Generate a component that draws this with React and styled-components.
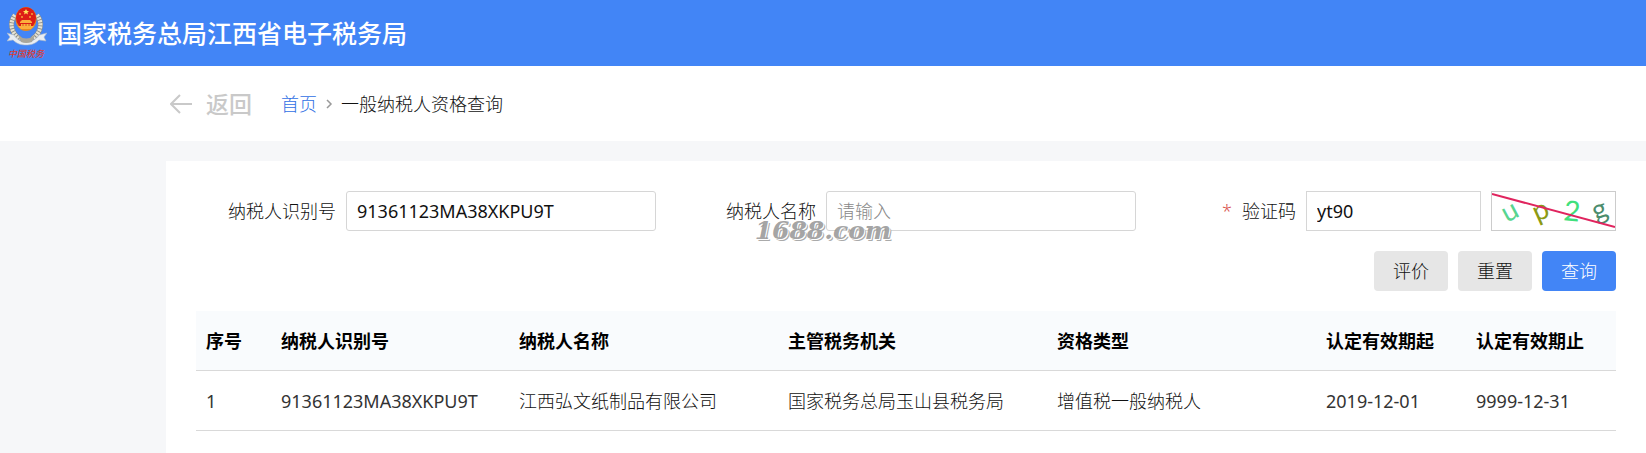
import React from 'react'
import styled, { createGlobalStyle, css } from 'styled-components'

const GlobalStyle = createGlobalStyle`
  * {
    box-sizing: border-box;
  }
  body {
    margin: 0;
    background: #f6f7f9;
    color: #111;
    font-family: 'Noto Sans', 'Noto Sans CJK SC', sans-serif;
    font-size: 18px;
    font-weight: 300;
    line-height: 24px;
  }
  button,
  input {
    font: inherit;
    color: inherit;
  }
`

const Page = styled.div`
  position: relative;
  display: flex;
  flex-direction: column;
  min-height: 100vh;
`

const Header = styled.header`
  display: flex;
  align-items: center;
  gap: 10px;
  height: 66px;
  padding: 0 7px;
  background: #4285f6;
  h1 {
    margin: 0;
    color: #fff;
    font-size: 25px;
    font-weight: 500;
    line-height: 32px;
  }
`

const Nav = styled.nav`
  display: flex;
  align-items: center;
  height: 75px;
  padding: 0 170px;
  background: #fff;
`

const BackButton = styled.button`
  display: flex;
  align-items: center;
  gap: 14px;
  margin-right: 29px;
  padding: 0;
  border: none;
  background: none;
  color: #c9c9c9;
  font-size: 23px;
  font-weight: 500;
  line-height: 32px;
  cursor: pointer;
`

const Crumbs = styled.div`
  display: flex;
  align-items: center;
  gap: 8px;
  a {
    color: #2f6fe4;
    text-decoration: none;
  }
`

const Panel = styled.main`
  flex-grow: 1;
  margin: 20px 0 0 166px;
  padding: 30px;
  background: #fff;
`

const Filters = styled.form`
  display: grid;
  grid-template-columns: repeat(3, minmax(0, 1fr));
  gap: 20px;
`

const Field = styled.div`
  display: flex;
  align-items: center;
  gap: 10px;
  label {
    flex: 0 0 140px;
    text-align: right;
    white-space: nowrap;
  }
`

const Required = styled.span`
  margin-right: 10px;
  color: #d9534f;
`

const Input = styled.input`
  flex: 1;
  min-width: 0;
  height: 40px;
  padding: 0 10px;
  border: 1px solid #d6d6d6;
  border-radius: ${props => (props.$square ? 0 : 3)}px;
  background: #fff;
  font-weight: 400;
  outline: none;
  &::placeholder {
    color: #888;
    font-weight: 300;
    opacity: 1;
  }
`

const Captcha = styled.svg`
  flex: 0 0 125px;
  width: 125px;
  height: 40px;
  border: 1px solid #ccc;
  font-family: Lato, sans-serif;
  font-size: 28px;
  font-weight: 400;
`

const Actions = styled.div`
  grid-column: 1 / -1;
  display: flex;
  justify-content: flex-end;
  gap: 10px;
`

const Button = styled.button`
  height: 40px;
  padding: 0 19px;
  border: none;
  border-radius: 4px;
  background: #e6e6e6;
  cursor: pointer;
  ${props =>
    props.$primary &&
    css`
      background: #4285f6;
      color: #fff;
    `}
`

const Table = styled.table`
  width: 100%;
  margin-top: 20px;
  border-collapse: separate;
  border-spacing: 0;
  table-layout: fixed;
`

const HeadCell = styled.th`
  height: 60px;
  padding: 0 10px;
  border-bottom: 1px solid #d9d9d9;
  background: #f9fbfd;
  color: #000;
  font-weight: 700;
  text-align: left;
  white-space: nowrap;
`

const Cell = styled.td`
  height: 60px;
  padding: 0 10px;
  border-bottom: 1px solid #d9d9d9;
  color: ${props => (props.$numeric ? '#333' : '#111')};
  font-weight: ${props => (props.$numeric ? 400 : 300)};
  white-space: nowrap;
`

const Col = styled.col`
  width: ${props => (props.$width ? `${props.$width}px` : 'auto')};
`

const Watermark = styled.div`
  position: absolute;
  top: 50%;
  left: 50%;
  transform: translate(-50%, -50%);
  color: rgba(140, 140, 140, 0.8);
  font-family: 'DejaVu Serif', serif;
  font-size: 25px;
  font-style: italic;
  font-weight: 700;
  text-shadow: 1px 1px 0 #fff, 2px 2px 0 #aaa;
  pointer-events: none;
`

const columns = [
  { key: 'index', title: '序号', width: 75, numeric: true },
  { key: 'taxId', title: '纳税人识别号', width: 238, numeric: true },
  { key: 'name', title: '纳税人名称' },
  { key: 'authority', title: '主管税务机关' },
  { key: 'type', title: '资格类型' },
  { key: 'from', title: '认定有效期起', width: 150, numeric: true },
  { key: 'to', title: '认定有效期止', width: 150, numeric: true },
]

const rows = [
  {
    index: 1,
    taxId: '91361123MA38XKPU9T',
    name: '江西弘文纸制品有限公司',
    authority: '国家税务总局玉山县税务局',
    type: '增值税一般纳税人',
    from: '2019-12-01',
    to: '9999-12-31',
  },
]

const Emblem = () => (
  <svg width="40" height="54" viewBox="0 0 40 54" aria-hidden="true">
    {/* wreath */}
    <path
      d="M8 9C2 17 4 27 13 33M30 9C36 17 34 27 25 33"
      fill="none"
      stroke="#8f8f88"
      strokeWidth="5"
    />
    <path
      d="M8 9C2 17 4 27 13 33M30 9C36 17 34 27 25 33"
      fill="none"
      stroke="#e6e3d6"
      strokeWidth="4"
      strokeDasharray="2 1"
    />
    {/* ribbon */}
    <path
      d="M0 27l7 2c3 5 8 7 12 7s10-2 13-7l8-2-3 4 2 4-7-1c-4 4-8 5-13 5s-9-1-13-5l-6 1 3-4z"
      fill="#e9edf2"
      stroke="#a5b3ca"
      strokeWidth="0.6"
    />
    <path d="M11 29q8 7 17 0l-3 7q-6 2-11 0z" fill="#a9a69b" />
    {/* red shield */}
    <ellipse cx="19" cy="13" rx="10.5" ry="12" fill="#e8891d" />
    <ellipse cx="19" cy="12" rx="10" ry="10.8" fill="#dd1d17" />
    <path d="M19 3l1 2h2l-1.600 1.400.6 2.100-2-1.200-2 1.200.6-2.100L16 5h2z" fill="#ffe45c" />
    <g fill="#fbb03d">
      <circle cx="13" cy="8" r="0.9" />
      <circle cx="25" cy="8" r="0.9" />
      <circle cx="15" cy="11" r="0.9" />
      <circle cx="23" cy="11" r="0.9" />
      <path d="M13 16l2-2h8l2 2v1H13zM14 18h10v2H14zM11 20h16l-3 3H14z" />
    </g>
    <path d="M16 18v2M19 18v2M22 18v2" stroke="#d4561a" strokeWidth="1" />
    <text
      x="19"
      y="51"
      textAnchor="middle"
      fill="#dc3b32"
      fontFamily="'Noto Sans CJK SC', sans-serif"
      fontSize="9"
      fontStyle="italic"
      fontWeight="500">
      中国税务
    </text>
  </svg>
)

const CaptchaImage = () => (
  <Captcha viewBox="0 0 123 38" role="img" aria-label="验证码图片">
    <text transform="translate(15 31) rotate(-28)" fill="#58d58f">u</text>
    <text transform="translate(45 30) rotate(-24)" fill="#8c9a14">p</text>
    <text transform="translate(71 28) rotate(6)" fill="#3fe07c">2</text>
    <text transform="translate(104 29) rotate(-22)" fill="#4b8c6c">g</text>
    <path d="M0 2L123 35" stroke="#e0245e" strokeWidth="2" />
  </Captcha>
)

const App = () => {
  return (
    <>
      <GlobalStyle />
      <Page>
        <Header>
          <Emblem />
          <h1>国家税务总局江西省电子税务局</h1>
        </Header>
        <Nav>
          <BackButton type="button">
            <svg width="22" height="20" fill="none" stroke="currentColor" strokeWidth="2">
              <path d="M10 1L1 10l9 9M1 10h21" />
            </svg>
            返回
          </BackButton>
          <Crumbs>
            <a href="#home">首页</a>
            <svg width="8" height="10" fill="none" stroke="#999" strokeWidth="1.500">
              <path d="M2 1l4 4-4 4" />
            </svg>
            <span>一般纳税人资格查询</span>
          </Crumbs>
        </Nav>
        <Panel>
          <Filters onSubmit={e => e.preventDefault()}>
            <Field>
              <label htmlFor="taxId">纳税人识别号</label>
              <Input id="taxId" defaultValue="91361123MA38XKPU9T" />
            </Field>
            <Field>
              <label htmlFor="name">纳税人名称</label>
              <Input id="name" placeholder="请输入" />
            </Field>
            <Field>
              <label htmlFor="code">
                <Required>*</Required>验证码
              </label>
              <Input id="code" defaultValue="yt90" $square />
              <CaptchaImage />
            </Field>
            <Actions>
              <Button type="button">评价</Button>
              <Button type="reset">重置</Button>
              <Button type="submit" $primary>查询</Button>
            </Actions>
          </Filters>
          <Table>
            <colgroup>
              {columns.map(col => (
                <Col key={col.key} $width={col.width} />
              ))}
            </colgroup>
            <thead>
              <tr>
                {columns.map(col => (
                  <HeadCell key={col.key} scope="col">{col.title}</HeadCell>
                ))}
              </tr>
            </thead>
            <tbody>
              {rows.map(row => (
                <tr key={row.taxId}>
                  {columns.map(col => (
                    <Cell key={col.key} $numeric={col.numeric}>{row[col.key]}</Cell>
                  ))}
                </tr>
              ))}
            </tbody>
          </Table>
        </Panel>
        <Watermark>1688.com</Watermark>
      </Page>
    </>
  )
}

export default App
